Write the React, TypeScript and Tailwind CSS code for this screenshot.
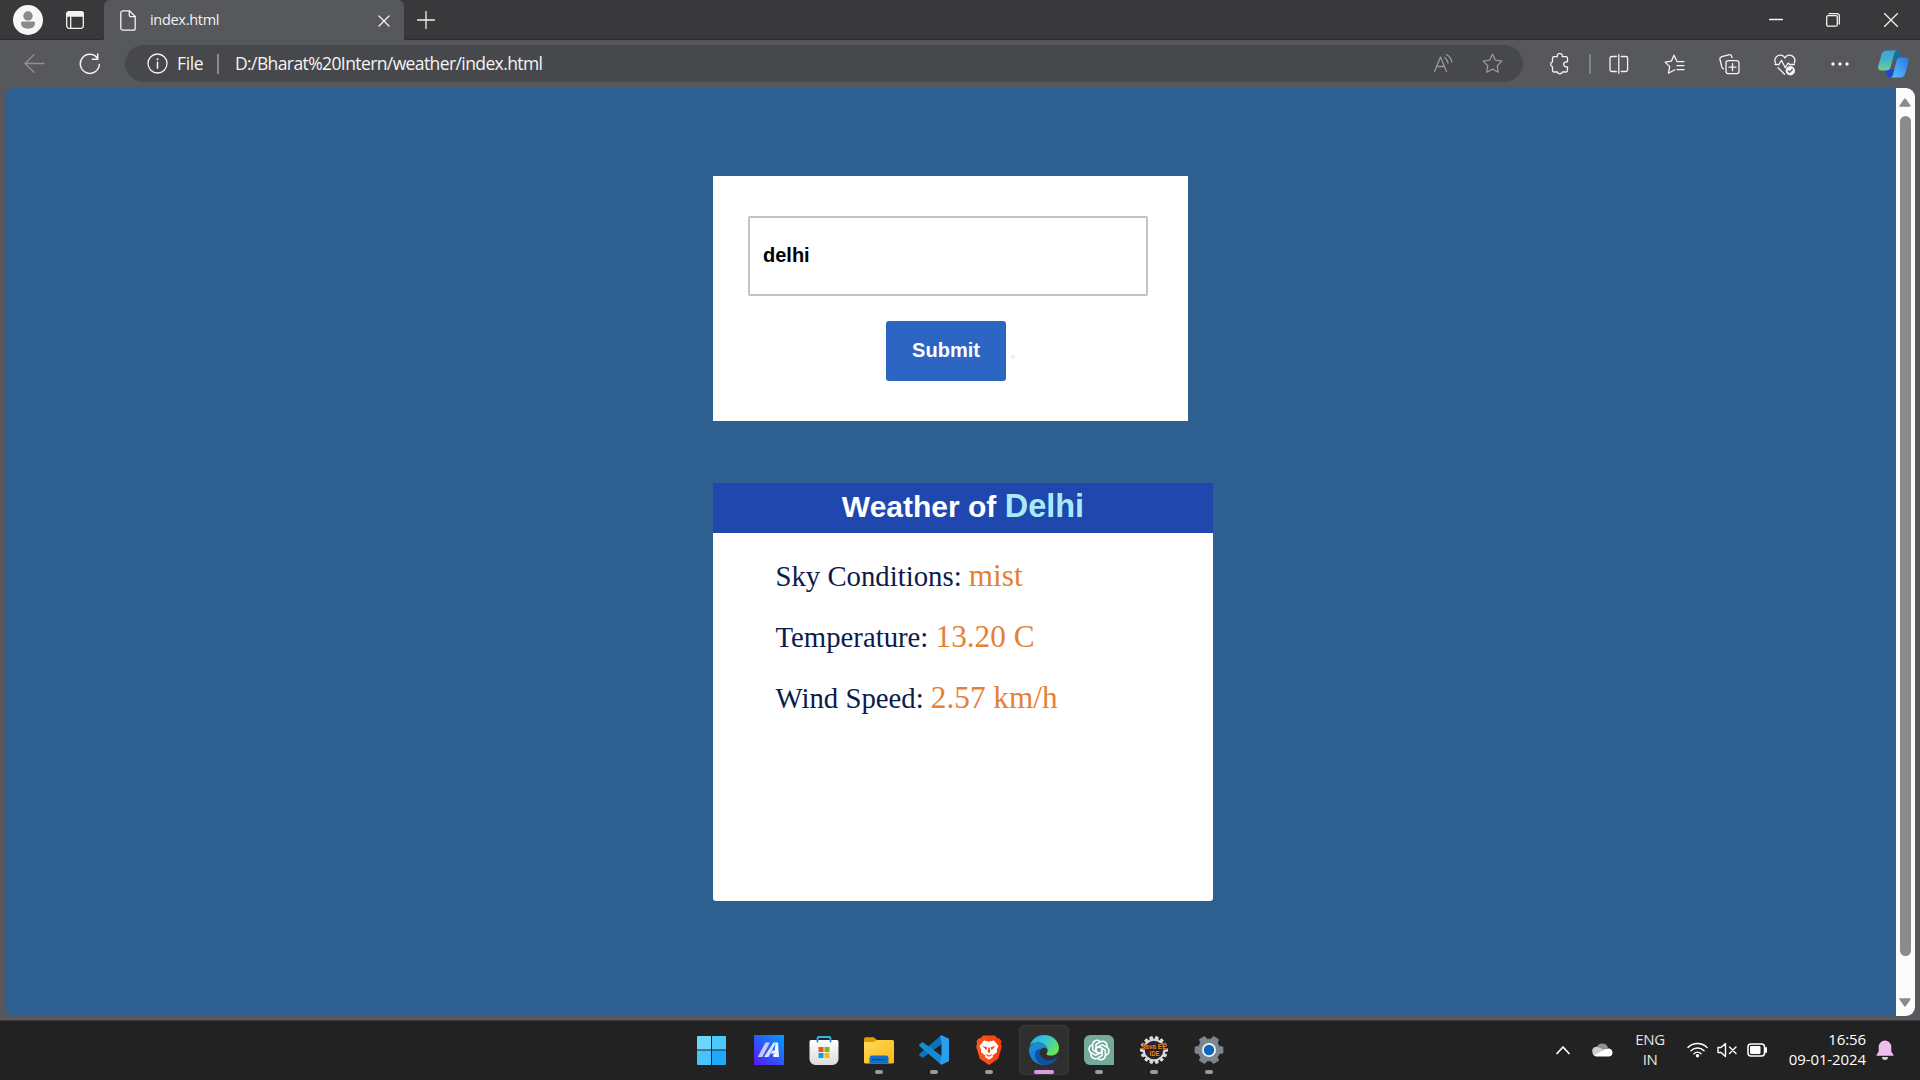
import React from "react";

const uiFont = "font-['Open_Sans','Noto_Sans',sans-serif]";

type IconProps = { w?: number; h?: number; vb?: string; cls?: string; children: React.ReactNode };

function Icon({ w = 24, h = 24, vb = "0 0 24 24", cls = "", children }: IconProps) {
  return (
    <svg
      width={w}
      height={h}
      viewBox={vb}
      className={`block shrink-0 ${cls}`}
      fill="none"
      stroke="currentColor"
      strokeWidth="1.3"
      strokeLinecap="round"
      strokeLinejoin="round"
    >
      {children}
    </svg>
  );
}

function TabStrip() {
  return (
    <div className="flex h-10 shrink-0 bg-[#39393c] text-[#f2f2f2]">
      <div className="flex w-[104px] items-center rounded-br-[5px] border-b border-[#2b2b2d] pl-[13px]">
        <Icon w={30} h={30} vb="0 0 30 30">
          <circle cx="15" cy="15" r="15" fill="#f7f7f7" stroke="none" />
          <circle cx="15" cy="11" r="4.7" fill="#8b8b8b" stroke="none" />
          <path d="M9.500 16.500h11a1.500 1.500 0 0 1 1.500 1.500c0 3.800-3 5.700-7 5.700s-7-1.900-7-5.700a1.500 1.500 0 0 1 1.500-1.500z" fill="#8b8b8b" stroke="none" />
        </Icon>
        <Icon w={20} h={20} vb="0 0 20 20" cls="ml-[22px]">
          <rect x="1.700" y="1.700" width="16.600" height="16.600" rx="2.500" />
          <path d="M1.700 4.200a2.500 2.500 0 0 1 2.500-2.500h11.600a2.500 2.500 0 0 1 2.500 2.500V6H1.700z" fill="currentColor" />
          <path d="M5.700 6v12" />
        </Icon>
      </div>
      <div className="flex w-[300px] items-center rounded-t-[6px] bg-[#57585b] pl-4">
        <Icon w={16} h={21} vb="0 0 16 21">
          <path d="M3 .8h6.500L15.200 6.500v11.700a2 2 0 0 1-2 2H2.800a2 2 0 0 1-2-2V2.800a2 2 0 0 1 2-2z" />
          <path d="M9.300 1v4.200a1.500 1.500 0 0 0 1.500 1.500H15" />
        </Icon>
        <span className={`${uiFont} ml-[14px] text-[14.5px] leading-5 tracking-[-0.3px]`}>index.html</span>
        <Icon w={12} h={12} vb="0 0 12 12" cls="ml-auto mr-[14px] mt-px">
          <path d="M1 1l10 10M11 1L1 11" />
        </Icon>
      </div>
      <div className="flex flex-1 items-center rounded-bl-[5px] border-b border-[#2b2b2d] pl-[13px] pr-[22px]">
        <Icon w={18} h={18} vb="0 0 18 18">
          <path d="M9 .5v17M.5 9h17" />
        </Icon>
        <Icon w={14} h={14} vb="0 0 14 14" cls="ml-auto">
          <path d="M.5 6.500h13" />
        </Icon>
        <Icon w={14} h={14} vb="0 0 14 14" cls="ml-[43px]">
          <rect x=".7" y="2.600" width="10.600" height="10.600" rx="1.500" />
          <path d="M3 .7h8a2.300 2.300 0 0 1 2.300 2.300v8" />
        </Icon>
        <Icon w={14} h={14} vb="0 0 14 14" cls="ml-[44px]">
          <path d="M.5.5l13 13M13.500.5l-13 13" />
        </Icon>
      </div>
    </div>
  );
}

const star = "M10.500 1.200l2.900 6 6.500.9-4.700 4.600 1.100 6.500-5.800-3.100-5.800 3.100 1.100-6.500L1.100 8.100l6.500-.9z";

function Toolbar() {
  return (
    <div className="flex h-12 shrink-0 items-center bg-[#57585b] text-[#f4f4f4]">
      <Icon w={21} h={20} vb="0 0 21 20" cls="ml-[24px] text-[#919193]">
        <path d="M20 9.500H1M10 .8L1 9.500l9 8.700" />
      </Icon>
      <Icon w={22} h={22} vb="0 0 22 22" cls="ml-[34px]">
        <path d="M20.300 11.500A9.500 9.500 0 1 1 18.300 5M18.700 1v5.300h-5.300" strokeWidth="1.500" />
      </Icon>
      <div className="-mt-px ml-6 flex h-[37px] w-[1398px] items-center rounded-full bg-[#47484b] pl-[22px] pr-5">
        <Icon w={21} h={21} vb="0 0 21 21">
          <circle cx="10.500" cy="10.500" r="9.500" />
          <path d="M10.500 9.300v6" strokeWidth="1.500" />
          <circle cx="10.500" cy="6.300" r="1" fill="currentColor" stroke="none" />
        </Icon>
        <span className={`${uiFont} ml-[9px] w-[30px] pb-px text-[17.5px] leading-6 tracking-[-0.35px]`}>File</span>
        <span className="ml-[10px] h-5 w-[2px] bg-[#8b8b8d]" />
        <span className={`${uiFont} ml-4 whitespace-nowrap pb-px text-[17.5px] leading-6 tracking-[-0.6px]`}>
          D:/Bharat%20Intern/weather/index.html
        </span>
        <div className="ml-auto flex items-center text-[#98999b]">
          <Icon w={21} h={21} vb="0 0 21 21">
            <path d="M1.500 18.500L7.500 4l6 14.500M3.600 13.500h7.800M11.500 4.500a8 8 0 0 1 3.500 5.500M13.500 1.500A10.500 10.500 0 0 1 18.800 9" />
          </Icon>
          <Icon w={21} h={21} vb="0 0 21 21" cls="ml-[28px]">
            <path d={star} />
          </Icon>
        </div>
      </div>
      <Icon w={20} h={22} vb="0 0 20 22" cls="ml-[26px]">
        <path d="M5 3.700h3.300a2.600 2.600 0 1 1 5 0H17a1.500 1.500 0 0 1 1.500 1.500v3.600h-1.300a2.500 2.500 0 0 0 0 5h1.300v3.700a1.500 1.500 0 0 1-1.500 1.500h-3.700a2.600 2.600 0 0 1-5 0H5a1.500 1.500 0 0 1-1.500-1.500v-3.700a2.600 2.600 0 0 1 0-5V5.200A1.500 1.500 0 0 1 5 3.700z" />
      </Icon>
      <span className="ml-[20px] h-5 w-[2px] bg-[#818284]" />
      <Icon w={20} h={20} vb="0 0 20 20" cls="ml-[18px]">
        <path d="M7.300 2.500H2.800A1.800 1.800 0 0 0 1 4.300v11.400a1.800 1.800 0 0 0 1.800 1.800h4.500M12.300 2.500h4.500a1.800 1.800 0 0 1 1.800 1.800v11.400a1.800 1.800 0 0 1-1.800 1.800h-4.500M9.800.7v18.600" />
      </Icon>
      <Icon w={21} h={21} vb="0 0 21 21" cls="ml-[35px]">
        <path d="M12.600 6.800L10 1.200 7.300 7.200l-6.200.9 4.600 4.500-1.200 6.600 6.300-3.500M13 7.600h7M13 11.600h7M13 15.600h7" />
      </Icon>
      <Icon w={21} h={21} vb="0 0 21 21" cls="ml-[34px]">
        <rect x="7" y="6.700" width="13" height="13" rx="2.500" />
        <path d="M13.500 9.700v7M10 13.200h7M4.500 14.800A3 3 0 0 1 2.800 12.800L1 5.500a2.500 2.500 0 0 1 1.800-2.900l7-1.800a2.500 2.500 0 0 1 3 1.700l.3 1.200" />
      </Icon>
      <Icon w={22} h={22} vb="0 0 22 22" cls="ml-[34px] mt-px">
        <path d="M1.500 9A5 5 0 0 1 11 4a5 5 0 0 1 9.300 5M1 10.500h4l2.500-4.200 3.800 7.400 2.800-4.700 1.500 1.500h4.700M4 13.700l6.500 6.500" />
        <circle cx="16.300" cy="16.700" r="4.700" fill="currentColor" stroke="none" />
        <path d="M14.300 16.900l1.400 1.300 2.600-2.700" stroke="#57585b" />
      </Icon>
      <Icon w={18} h={6} vb="0 0 18 6" cls="ml-[35px]">
        <g fill="currentColor" stroke="none">
          <circle cx="2" cy="3" r="1.700" />
          <circle cx="9" cy="3" r="1.700" />
          <circle cx="16" cy="3" r="1.700" />
        </g>
      </Icon>
      <Icon w={31} h={28} vb="0 0 31 28" cls="ml-[29px]">
        <defs>
          <linearGradient id="cpA" x1="0" y1="0" x2="0" y2="1">
            <stop offset="0" stopColor="#3fa2dc" />
            <stop offset=".5" stopColor="#45b2c7" />
            <stop offset="1" stopColor="#6fd18c" />
          </linearGradient>
          <linearGradient id="cpB" x1="1" y1="0" x2="0" y2="1">
            <stop offset="0" stopColor="#2a74dd" />
            <stop offset=".5" stopColor="#439df5" />
            <stop offset="1" stopColor="#57c5ee" />
          </linearGradient>
        </defs>
        <g stroke="none">
          <path d="M15 .5h4c2.200 0 3 1.300 3.500 3l1.300 4.500H21c-2.500 0-4 1-5 3z" fill="#206b9e" />
          <path d="M7 19.500h9.500l-2.500 8h-2C9.700 27.500 9 26 8.300 24z" fill="#2345cf" />
          <path d="M8.500.5H19.500c-2 0-3 1.500-3.500 3.500L12.600 17c-.7 2.500-2 3.500-4.500 3.500H3.500C.7 20.500-.4 18.500.3 16L3.500 4.300C4.200 2 5.800.5 8.500.5z" fill="url(#cpA)" />
          <path d="M21.800 7.500h5.500c2.700 0 3.700 2 3.100 4.500l-3.200 11.500c-.7 2.700-2.200 4-5 4H12c2 0 2.700-1.500 3.200-3.500L18.500 11c.6-2.300 1.300-3.500 3.300-3.500z" fill="url(#cpB)" />
        </g>
      </Icon>
    </div>
  );
}

function Scrollbar() {
  return (
    <div className="flex w-[19px] shrink-0 flex-col items-center bg-[#fcfcfc] pr-px pt-[10px] pb-[9px]">
      <Icon w={12} h={9} vb="0 0 12 9">
        <path d="M6 1L11 8H1z" fill="#8b8b8b" stroke="#8b8b8b" />
      </Icon>
      <div className="mt-[9px] h-[840px] w-[11px] rounded-full bg-[#8b8b8b]" />
      <Icon w={12} h={9} vb="0 0 12 9" cls="mt-auto">
        <path d="M6 8l5-7H1z" fill="#8b8b8b" stroke="#8b8b8b" />
      </Icon>
    </div>
  );
}

const readings = [
  { label: "Sky Conditions:", value: "mist" },
  { label: "Temperature:", value: "13.20 C" },
  { label: "Wind Speed:", value: "2.57 km/h" },
];

function WeatherPage() {
  return (
    <main className="flex-1 bg-[#2d6091] pl-[708px] pt-[88px]">
      <form className="flex h-[245px] w-[475px] flex-col bg-white pl-[35px] pt-10" onSubmit={(e) => e.preventDefault()}>
        <input
          className="h-20 w-[400px] rounded-[2px] border-2 border-[#c3c3c3] bg-white px-[13px] pb-[2px] font-['Liberation_Sans',sans-serif] text-[20px] font-bold text-black outline-none"
          defaultValue="delhi"
        />
        <div className="mt-[25px] flex pl-[138px]">
          <button className="h-[60px] w-[120px] rounded-[3px] bg-[#2c65c2] pb-[2px] font-['Liberation_Sans',sans-serif] text-[20px] font-bold text-white">
            Submit
          </button>
          <span className="ml-[5px] mt-[34px] h-1 w-1 bg-[#efefef]" />
        </div>
      </form>
      <section className="mt-[62px] h-[418px] w-[500px] rounded-b-[3px] bg-white">
        <h1 className="h-[50px] whitespace-nowrap bg-[#1f47ae] text-center font-['Liberation_Sans',sans-serif] text-[30px] font-bold leading-[48px] text-white">
          Weather of <span className="text-[32.5px] leading-none text-[#a9eaf9]">Delhi</span>
        </h1>
        <div className="pl-[62.5px] pt-[13px]">
          {readings.map((r) => (
            <p
              key={r.label}
              className="h-[61px] whitespace-nowrap font-['Liberation_Serif',serif] text-[28.75px] leading-[60px] text-[#0d1b4c]"
            >
              {r.label} <span className="text-[31.25px] text-[#e58035]">{r.value}</span>
            </p>
          ))}
        </div>
      </section>
    </main>
  );
}

function Gear({ fill, teeth, outer, inner }: { fill: string; teeth: number; outer: number; inner: number }) {
  const pts: string[] = [];
  const step = (Math.PI * 2) / teeth;
  for (let i = 0; i < teeth; i++) {
    const a = i * step;
    [
      [inner, -0.32],
      [outer, -0.2],
      [outer, 0.2],
      [inner, 0.32],
    ].forEach(([r, t]) => pts.push(`${15 + r * Math.cos(a + t * step)},${15 + r * Math.sin(a + t * step)}`));
  }
  return <polygon points={pts.join(" ")} fill={fill} stroke={fill} strokeWidth="1" />;
}

const apps: { name: string; art: React.ReactNode; mark?: "idle" | "active" }[] = [
  {
    name: "Start",
    art: (
      <g stroke="none">
        <path d="M2 1h13v13.500H1V2a1 1 0 0 1 1-1z" fill="#6fd5fb" />
        <path d="M16 1h13a1 1 0 0 1 1 1v12.500H16z" fill="#4cc8fa" />
        <path d="M1 15.500h14V30H2a1 1 0 0 1-1-1z" fill="#48c4fa" />
        <path d="M16 15.500h14V29a1 1 0 0 1-1 1H16z" fill="#20a9fb" />
      </g>
    ),
  },
  {
    name: "MyASUS",
    art: (
      <g stroke="none">
        <path d="M0 0h30v30H0z" fill="url(#asus)" />
        <path d="M11.500 7.500H16L8.300 22H3.800z" fill="#c3c9fd" />
        <path d="M19.500 7.500H22L14.500 22H10z" fill="#dfe5ff" />
        <path d="M21.500 7.500H24l1 14.500h-4.300v-3.500h-4l1.800-3h2.200z" fill="#f1f4ff" />
        <circle cx="20.500" cy="20.500" r="1.500" fill="#fff" />
      </g>
    ),
  },
  {
    name: "Microsoft Store",
    art: (
      <g stroke="none">
        <path d="M8.500 6V3.500a1.500 1.500 0 0 1 1.500-1.500h10a1.500 1.500 0 0 1 1.500 1.500V6" stroke="#2dbdf0" strokeWidth="1.800" />
        <path d="M.5 6.500A1.500 1.500 0 0 1 2 5h26a1.500 1.500 0 0 1 1.500 1.500V24a6 6 0 0 1-6 6h-17a6 6 0 0 1-6-6z" fill="url(#store)" />
        <path d="M9.500 12h5v5h-5z" fill="#f05022" />
        <path d="M15.500 12h5v5h-5z" fill="#7fb902" />
        <path d="M9.500 18h5v5h-5z" fill="#02a4ef" />
        <path d="M15.500 18h5v5h-5z" fill="#feb801" />
        <path d="M8.500 5v1.500M21.500 5v1.500" stroke="#1586c4" strokeWidth="1.800" />
      </g>
    ),
  },
  {
    name: "File Explorer",
    mark: "idle",
    art: (
      <g stroke="none">
        <path d="M0 4a1.800 1.800 0 0 1 1.800-1.800h8L13 5h7v5H0z" fill="#dc9d03" />
        <path d="M0 7h10l3-2h15.500A1.500 1.500 0 0 1 30 6.500V27a1.500 1.500 0 0 1-1.500 1.500h-27A1.500 1.500 0 0 1 0 27z" fill="url(#folder)" />
        <path d="M5.500 28.500V23a2.500 2.500 0 0 1 2.500-2.500h14a2.500 2.500 0 0 1 2.500 2.500v5.500z" fill="#0d71c8" />
        <path d="M8 24h14v1.300H8z" fill="#08448a" />
      </g>
    ),
  },
  {
    name: "Visual Studio Code",
    mark: "idle",
    art: (
      <g stroke="none">
        <path d="M.6 18.700L22 .4 23.500 8.500 4.300 22.500a1.300 1.300 0 0 1-1.600 0L.7 20.700a1.300 1.300 0 0 1-.1-2z" fill="#0b74bc" />
        <path d="M.6 11.300L22 29.600 23.500 21.500 4.300 7.500a1.300 1.300 0 0 0-1.600 0L.7 9.300a1.300 1.300 0 0 0-.1 2z" fill="#148bd2" />
        <path d="M22.500.2L29 3.200a1.500 1.500 0 0 1 1 1.500v20.600a1.500 1.500 0 0 1-1 1.500l-6.500 3-1.500-1 1.500-6V7.200l-1.500-6z" fill="#2a9ef0" />
      </g>
    ),
  },
  {
    name: "Brave",
    mark: "idle",
    art: (
      <g stroke="none">
        <path d="M9 .5h12l2.700 3 1.500-.3 2.300 3-.6 2.500.9 2.800-3.600 12.300L15 30 5.800 23.800 2.200 11.500l.9-2.800-.6-2.500 2.300-3 1.500.3z" fill="url(#brave)" />
        <path d="M10 5.500l5 1 5-1 4.500 5.500-1.700 3.500.2 2.700-4.500 3.300.5 1.500-4 2.700-4-2.700.5-1.500L7 17.200l.2-2.700L5.500 11z" fill="#fff" />
        <path d="M8.300 11l5 1.200-.8 3zM21.700 11l-5 1.200.8 3zM14.300 12.500h1.400l.6 4.500L15 18l-1.300-1zM11.500 18.800l3.500 1.800 3.500-1.800-2 2.700h-3z" fill="#fb4a1c" />
      </g>
    ),
  },
  {
    name: "Microsoft Edge",
    mark: "active",
    art: (
      <g stroke="none">
        <path d="M.5 11C2.500 4.500 8 0 15 0c9 0 15 6.300 15 13 0 5-3.800 7.500-8 7.500-3.300 0-5-.8-4.500-1.800 1-1.500 1.200-2.500 1-4C18 11 15 8 10.500 7.500 6 7.200 2.500 8 .5 11z" fill="url(#edgeTop)" />
        <path d="M0 15C0 10 4.500 7.500 9.500 7.500c5 0 8.500 3 9 7-1.500-2-5-2.800-7 0-3 4.500 1 11 7 12.300L15 30C6.500 30 0 23.500 0 15z" fill="url(#edgeMid)" />
        <path d="M11.500 14.500c-2.500 6.500 3.500 11.500 10 10.500 2.500-.4 4.500-1.300 6-2.500.6-.4 1.200.1.800.7C25.800 27 21.500 30 16 30c-6 0-10-5-10-10 0-4.500 2.500-6.500 5.500-5.500z" fill="#11509f" />
      </g>
    ),
  },
  {
    name: "ChatGPT",
    mark: "idle",
    art: (
      <g>
        <path d="M6 0h18a6 6 0 0 1 6 6v24H6a6 6 0 0 1-6-6V6a6 6 0 0 1 6-6z" fill="#74aa9c" stroke="none" />
        <g stroke="#fff" strokeWidth="1.500">
          {[0, 60, 120, 180, 240, 300].map((a) => (
            <path key={a} transform={`rotate(${a} 15 15)`} d="M12 16.800V9.500l4.300-2.600c3.400-1.900 7.200.7 6.700 4.600M12 13.200l3-1.800" />
          ))}
        </g>
      </g>
    ),
  },
  {
    name: "Eclipse",
    mark: "idle",
    art: (
      <g>
        <Gear fill="#dcdcdc" teeth={14} outer={13.5} inner={10.8} />
        <circle cx="15" cy="15" r="9.300" fill="#2d2438" stroke="none" />
        <g
          stroke="#20140c"
          strokeWidth="1"
          paintOrder="stroke"
          fill="#f28a1c"
          fontFamily="Liberation Sans"
          fontWeight="bold"
          textAnchor="middle"
        >
          <text x="15" y="14" fontSize="7.500" textLength="25" lengthAdjust="spacingAndGlyphs">Java EE</text>
          <text x="15.500" y="20.500" fontSize="7" textLength="10" lengthAdjust="spacingAndGlyphs">IDE</text>
        </g>
      </g>
    ),
  },
  {
    name: "Settings",
    mark: "idle",
    art: (
      <g>
        <Gear fill="#7c868f" teeth={6} outer={14.2} inner={11} />
        <circle cx="15" cy="15" r="7" fill="#f3f3f3" stroke="none" />
        <circle cx="15" cy="15" r="5.200" fill="#0a66b9" stroke="none" />
      </g>
    ),
  },
];

function AppDefs() {
  return (
    <svg width="0" height="0" className="absolute">
      <defs>
        <linearGradient id="asus" x1="0" y1="1" x2="1" y2="0">
          <stop offset="0" stopColor="#5a17f5" />
          <stop offset="1" stopColor="#009dff" />
        </linearGradient>
        <linearGradient id="store" x1="0" y1="0" x2="0" y2="1">
          <stop offset="0" stopColor="#fff" />
          <stop offset="1" stopColor="#dcdcdc" />
        </linearGradient>
        <linearGradient id="folder" x1="0" y1="0" x2="1" y2="1">
          <stop offset="0" stopColor="#ffd95c" />
          <stop offset="1" stopColor="#fbb90f" />
        </linearGradient>
        <linearGradient id="brave" x1="0" y1="0" x2="1" y2="0">
          <stop offset="0" stopColor="#fb5a1f" />
          <stop offset="1" stopColor="#fb3a0c" />
        </linearGradient>
        <linearGradient id="edgeTop" x1="0" y1="0" x2="1" y2=".6">
          <stop offset="0" stopColor="#2aa6df" />
          <stop offset=".5" stopColor="#33c5d8" />
          <stop offset="1" stopColor="#6ae355" />
        </linearGradient>
        <linearGradient id="edgeMid" x1="0" y1="0" x2="0" y2="1">
          <stop offset="0" stopColor="#1c8fd6" />
          <stop offset="1" stopColor="#0d7ed8" />
        </linearGradient>
      </defs>
    </svg>
  );
}

function Taskbar() {
  return (
    <footer className={`${uiFont} grid h-[59px] shrink-0 grid-cols-[686px_1fr_379px] bg-[#222222] text-white`}>
      <div />
      <nav className="flex pt-1">
        <AppDefs />
        {apps.map((a, i) => (
          <div
            key={a.name}
            title={a.name}
            className={`flex h-[50px] w-[50px] shrink-0 flex-col items-center rounded-[5px] border ${i === 0 ? "mr-2" : "mr-[5px]"} ${
              a.mark === "active" ? "border-[#3a3a3a] bg-[#2f2f2f]" : "border-transparent"
            } pt-[9px]`}
          >
            <Icon w={30} h={30} vb="0 0 30 30">
              {a.art}
            </Icon>
            {a.mark === "idle" && <span className="mt-[5px] h-1 w-2 rounded-full bg-[#9a9a9a]" />}
            {a.mark === "active" && <span className="mt-[5px] h-1 w-5 shrink-0 rounded-full bg-[#d99ce2]" />}
          </div>
        ))}
      </nav>
      <div className="flex items-center">
        <Icon w={16} h={10} vb="0 0 16 10" cls="-mt-px ml-[14px]">
          <path d="M2 8.500l6-6.500 6 6.500" strokeWidth="1.700" />
        </Icon>
        <Icon w={21} h={14} vb="0 0 21 14" cls="-mt-px ml-[21px]">
          <g stroke="none">
            <path d="M4.500 5A6 6 0 0 1 16 4.500L12 8z" fill="#8f8f8f" />
            <path d="M.5 9.500A4.300 4.300 0 0 1 7 4.500l7 3-10 5.500A3.700 3.700 0 0 1 .5 9.500z" fill="#cfcfcf" />
            <path d="M2 12.500L13 6.300c4-2.300 8 .2 7.500 3.700a4 4 0 0 1-4 3.500H4.500A4 4 0 0 1 2 12.500z" fill="#fff" />
          </g>
        </Icon>
        <div className="-mt-[3px] ml-[19px] w-9 text-center text-[15px] leading-5 tracking-[-0.4px] text-[#e4e4e4]">
          <div>ENG</div>
          <div>IN</div>
        </div>
        <Icon w={21} h={16} vb="0 0 21 16" cls="-mt-[2px] ml-[19px]">
          <path d="M1 5.500a13.500 13.500 0 0 1 19 0M4 8.800a9.200 9.200 0 0 1 13 0M7 11.700a5 5 0 0 1 7 0" strokeWidth="1.500" />
          <circle cx="10.500" cy="13.800" r="1.700" fill="#fff" stroke="none" />
        </Icon>
        <Icon w={20} h={16} vb="0 0 20 16" cls="-mt-px ml-[9px]">
          <path d="M1 5.500h3L8.500 1.500v13L4 10.500H1zM12.500 5l6.500 6.500M19 5l-6.500 6.500" strokeWidth="1.400" />
        </Icon>
        <Icon w={21} h={14} vb="0 0 21 14" cls="-mt-px ml-[10px]">
          <rect x="1" y="1" width="16.500" height="12" rx="3" strokeWidth="1.500" />
          <rect x="3" y="3" width="10.500" height="8" rx="1.200" fill="#fff" stroke="none" />
          <path d="M19 5v4" strokeWidth="2" />
        </Icon>
        <div className="-mt-[3px] ml-[16px] w-[82px] whitespace-nowrap text-right text-[15px] leading-5 tracking-[-0.1px]">
          <div>16:56</div>
          <div>09-01-2024</div>
        </div>
        <Icon w={18} h={20} vb="0 0 18 20" cls="-mt-px ml-[10px]">
          <path d="M9 .5A6.300 6.300 0 0 1 15.300 7v4.500L17.500 15v.8H.5V15l2.200-3.500V7A6.300 6.300 0 0 1 9 .5zM6 17h6a3 3 0 0 1-6 0z" fill="#f0bdf3" stroke="none" />
        </Icon>
      </div>
    </footer>
  );
}

export default function App() {
  return (
    <div className="flex h-[1080px] w-[1920px] flex-col overflow-hidden bg-[#57585b]">
      <TabStrip />
      <Toolbar />
      <div className="mr-[5px] ml-[5px] flex h-[928px] shrink-0 overflow-hidden rounded-[9px]">
        <WeatherPage />
        <Scrollbar />
      </div>
      <div className="h-[5px] shrink-0 border-b border-[#3b3b3d] bg-[#57585b]" />
      <Taskbar />
    </div>
  );
}
